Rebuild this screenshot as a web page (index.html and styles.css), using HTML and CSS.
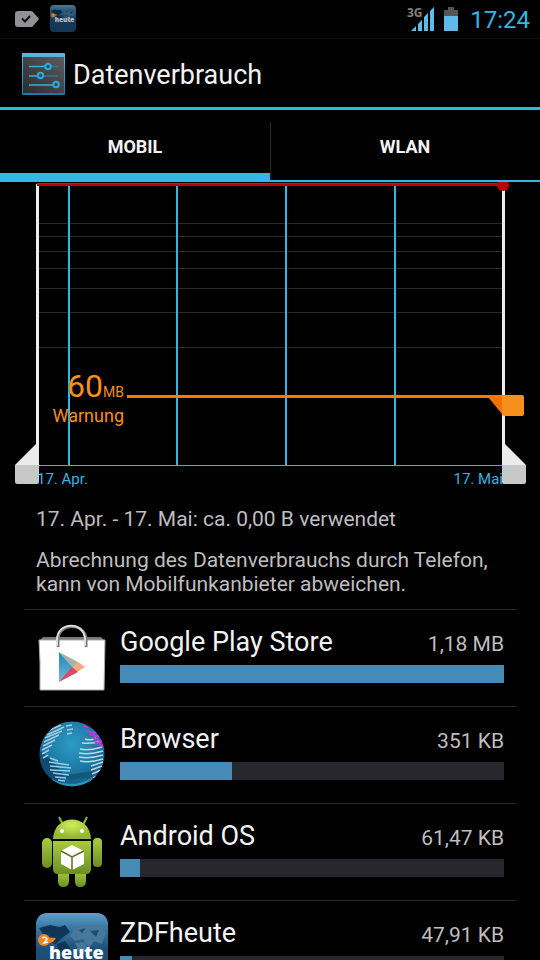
FILE: index.html
```html
<!DOCTYPE html>
<html lang="de">
<head>
    <meta charset="UTF-8">
    <meta name="viewport" content="width=device-width, initial-scale=1">
    <title>Datenverbrauch</title>
    <link rel="stylesheet" href="styles.css">
</head>
<body>
    <div class="status-bar">
        <svg class="status-tag" width="24" height="16" viewBox="0 0 24 16" aria-hidden="true">
            <path d="M3 0H16Q17.500 0 18.500 1.500L24 8L18.500 14.500Q17.500 16 16 16H3Q0 16 0 13V3Q0 0 3 0Z" fill="#929296"/>
            <path d="M7 7.500L10 10.500L15 5" fill="none" stroke="#111" stroke-width="2"/>
        </svg>
        <svg width="26" height="27" viewBox="0 0 72 72" preserveAspectRatio="none" aria-hidden="true">
            <use href="#heute" opacity="0.75"/>
        </svg>
        <span class="spacer"></span>
        <svg width="28" height="33" viewBox="0 -4 28 33" aria-hidden="true">
            <text class="network" x="0" y="11">3G</text>
            <path d="M4 25L9 20V25ZM11 18L15 14V25H11ZM17 11L21 7V25H17ZM23 5L27 1V25H23Z" fill="#5fb9e9"/>
        </svg>
        <svg class="battery" width="14" height="24" viewBox="0 0 14 24" aria-hidden="true">
            <path d="M4 0H10V3H14V9H0V3H4Z" fill="#555"/>
            <path d="M0 9H14V24H0Z" fill="#5fb9e9"/>
        </svg>
        <span class="clock">17:24</span>
    </div>

    <header class="title-bar">
        <svg width="44" height="42" viewBox="0 0 44 42" aria-hidden="true">
            <defs>
                <linearGradient id="panel" x1="0" y1="1" x2="1" y2="0">
                    <stop offset="0" stop-color="#292c2f"/>
                    <stop offset="1" stop-color="#5b5b5d"/>
                </linearGradient>
                <linearGradient id="frame" x1="0" y1="0" x2="0" y2="1">
                    <stop offset="0" stop-color="#58b9e8"/>
                    <stop offset="1" stop-color="#167ba8"/>
                </linearGradient>
            </defs>
            <rect width="43" height="42" rx="1" fill="url(#frame)"/>
            <rect x="1" y="4" width="41" height="36" fill="url(#panel)"/>
            <g fill="none" stroke="#267aa3" stroke-width="1.500">
                <path d="M29 13.500H36M22 23H36M37 32H38"/>
                <path d="M7 13.500H24M7 23H16M7 32H31" stroke="#38afe0"/>
            </g>
            <g fill="#354650" stroke="#2eaae0" stroke-width="2">
                <circle cx="26" cy="13.500" r="2.700"/>
                <circle cx="18.500" cy="22.500" r="2.700"/>
                <circle cx="34" cy="31.500" r="2.700"/>
            </g>
        </svg>
        <h1>Datenverbrauch</h1>
    </header>

    <div class="tabs" role="tablist">
        <button class="tab active" type="button" role="tab" aria-selected="true">MOBIL</button>
        <button class="tab" type="button" role="tab" aria-selected="false">WLAN</button>
    </div>

    <main>
        <svg class="chart" viewBox="0 0 540 312" role="img" aria-label="Datenverbrauch 17. Apr. - 17. Mai">
            <!-- Raster -->
            <path d="M38 41.500H502M38 54.500H502M38 69.500H502M38 86.500H502M38 106.500H502M38 130.500H502M38 165.500H502" stroke="#2b2b2b"/>
            <path d="M69 3V283M177 3V283M286 3V283M395 3V283" stroke="#33b5e5" stroke-width="2"/>
            <path d="M38 283.500H503" stroke="#33b5e5"/>
            <text class="axis" x="37" y="302">17. Apr.</text>
            <text class="axis" x="503" y="302" text-anchor="end">17. Mai</text>

            <!-- Zeitraum -->
            <path d="M36 2H39V283H36ZM502 2H505V283H502Z" fill="#ededed"/>
            <path d="M15 283L36 262H39V283ZM502 262H505L526 283H502Z" fill="#ebebeb"/>
            <path d="M15 283H39V300Q39 302 37 302H17Q15 302 15 300ZM502 283H526V300Q526 302 524 302H504Q502 302 502 300Z" fill="#c8c8c8"/>

            <!-- Limit -->
            <path d="M37 1.500H503" stroke="#5e4444"/>
            <path d="M37 3H503" stroke="#b90000" stroke-width="2"/>
            <circle cx="503" cy="3" r="6" fill="#b90000"/>

            <!-- Warnung -->
            <path d="M127 213H502V216H127Z" fill="#ff7800"/>
            <path d="M488 215H502V232Z" fill="#f57200"/>
            <path d="M502 213H522Q524 213 524 215V232Q524 234 522 234H504Q502 234 502 232Z" fill="#f68f1b"/>
            <text class="warning" x="124" y="215" text-anchor="end"><tspan class="amount">60</tspan><tspan class="unit">MB</tspan></text>
            <text class="warning" x="124" y="240" text-anchor="end">Warnung</text>
        </svg>

        <div class="summary">
            <p>17. Apr. - 17. Mai: ca. 0,00 B verwendet</p>
            <p>Abrechnung des Datenverbrauchs durch Telefon, kann von Mobilfunkanbieter abweichen.</p>
        </div>

        <ul class="apps">
            <li class="app">
                <svg class="app-icon" viewBox="0 0 72 72" aria-hidden="true">
                    <defs>
                        <linearGradient id="play" x1="0" y1="0" x2="0" y2="1">
                            <stop offset="0" stop-color="#178abb"/>
                            <stop offset="1" stop-color="#79b5d7"/>
                        </linearGradient>
                    </defs>
                    <path d="M7 15H65L69 19H3Z" fill="#777"/>
                    <path d="M3 18H69L68 68H4L4 40Z" fill="#fff" stroke="#aaa"/>
                    <path d="M22 25V18C22 0 50 0 50 18V25" fill="none" stroke="#777" stroke-width="3"/>
                    <path d="M21 24V18C21 -1 49 -1 49 18V24" fill="none" stroke="#ddd" stroke-width="2"/>
                    <path d="M23 30V60L38 46Z" fill="url(#play)"/>
                    <path d="M23 30L42 40L37 46Z" fill="#a8b4a6"/>
                    <path d="M42 40L49 45L41 50L36 46Z" fill="#f7aa7c"/>
                    <path d="M36 45L42 50L23 60Z" fill="#db4966"/>
                </svg>
                <div class="app-info">
                    <div class="app-line"><span class="app-name">Google Play Store</span><span class="app-size">1,18 MB</span></div>
                    <div class="bar"><div class="bar-fill" style="width: 100%"></div></div>
                </div>
            </li>
            <li class="app">
                <svg class="app-icon" viewBox="0 2 72 72" aria-hidden="true">
                    <defs>
                        <radialGradient id="sea" cx="0.5" cy="0.35" r="0.6">
                            <stop offset="0" stop-color="#2c9cc5"/>
                            <stop offset="0.65" stop-color="#1c7aa5"/>
                            <stop offset="1" stop-color="#10618c"/>
                        </radialGradient>
                        <clipPath id="globe"><circle cx="36" cy="37" r="32.500"/></clipPath>
                    </defs>
                    <circle cx="36" cy="37" r="32.500" fill="url(#sea)"/>
                    <g clip-path="url(#globe)" fill="none">
                        <path d="M4 34L13 41L28 57L26 67L14 61L4 48Z" fill="#104c70"/>
                        <path d="M28 58L61 54L56 60L33 63Z" fill="#145878"/>
                        <path d="M14 13L25 8M11 18L28 10M9 21L26 14M8 25L23 18M7 29L19 23M6 33L16 28M6 37L13 33M7 41L12 38M30 9L36 8M31 13L37 12M31 17L36 16" stroke="#a9cde0" stroke-width="1.500"/>
                        <path d="M14 41L22 44M13 45L33 48M14 49L35 51M14 53L34 54M17 56L33 58M19 60L30 61M22 63L29 64" stroke="#97cce7" stroke-width="1.500"/>
                        <path d="M49 22Q55 24 60 21M46 26Q56 27 66 24M44 32Q54 34 66 30M43 36Q54 38 67 34M43 40Q54 42 67 38M44 44Q54 46 67 42M55 49L67 45M55 53L66 49M56 57L65 53M57 61L63 58" stroke="#c5d4d8" stroke-width="1.500"/>
                        <path d="M47 9L52 10M51 14L60 16M53 17L63 20M57 21L66 25M59 25L68 29" stroke="#b43bdc" stroke-width="2"/>
                        <path d="M15 63Q36 74 57 62" stroke="#33b5e5" stroke-width="3" opacity="0.6"/>
                    </g>
                </svg>
                <div class="app-info">
                    <div class="app-line"><span class="app-name">Browser</span><span class="app-size">351 KB</span></div>
                    <div class="bar"><div class="bar-fill" style="width: 29.2%"></div></div>
                </div>
            </li>
            <li class="app">
                <svg class="app-icon" viewBox="0 0 72 72" aria-hidden="true">
                    <defs>
                        <linearGradient id="robot" x1="0" y1="0" x2="0" y2="1">
                            <stop offset="0" stop-color="#a9cb3c"/>
                            <stop offset="1" stop-color="#6c8e24"/>
                        </linearGradient>
                        <radialGradient id="head" cx="0.5" cy="0.3" r="0.6">
                            <stop offset="0" stop-color="#d0ee58"/>
                            <stop offset="1" stop-color="#94b733"/>
                        </radialGradient>
                    </defs>
                    <path d="M27 9L23 1M47 9L51 1" stroke="#92b335" stroke-width="2"/>
                    <path d="M17 23C18 -3 54 -3 55 23Z" fill="url(#head)"/>
                    <g fill="url(#robot)">
                        <path d="M22 55H33V65Q33 71 27 71Q22 71 22 65ZM39 55H50V65Q50 71 44 71Q39 71 39 65Z"/>
                        <path d="M17 25H55V53Q55 58 50 58H22Q17 58 17 53Z"/>
                        <rect x="6" y="22" width="10" height="30" rx="5"/>
                        <rect x="57" y="22" width="9" height="29" rx="4"/>
                    </g>
                    <circle cx="26" cy="15" r="2" fill="#fff"/>
                    <circle cx="46" cy="15" r="2" fill="#fff"/>
                    <path d="M36 29L48 35V48L36 54L25 48V35Z" fill="#fff"/>
                    <path d="M25 35L36 41L48 35M36 41V54" fill="none" stroke="#5e6d2a" stroke-width="1.500"/>
                </svg>
                <div class="app-info">
                    <div class="app-line"><span class="app-name">Android OS</span><span class="app-size">61,47 KB</span></div>
                    <div class="bar"><div class="bar-fill" style="width: 5.2%"></div></div>
                </div>
            </li>
            <li class="app">
                <svg class="app-icon" viewBox="0 0 72 72" aria-hidden="true">
                    <defs>
                        <linearGradient id="sky" x1="0" y1="0" x2="0" y2="1">
                            <stop offset="0" stop-color="#63a0c8"/>
                            <stop offset="0.18" stop-color="#3c7ca8"/>
                            <stop offset="0.5" stop-color="#1d5077"/>
                            <stop offset="1" stop-color="#17496f"/>
                        </linearGradient>
                        <g id="heute">
                            <rect width="72" height="72" rx="11" fill="url(#sky)"/>
                            <path d="M3 15L14 12L24 14L29 12L34 19L26 25L20 31L13 29L8 23ZM21 31L29 28L34 35L28 46L22 43Z" fill="#0f3558"/>
                            <path d="M38 16L48 12L65 13L70 20L66 31L58 28L53 35L47 26L39 28L34 23ZM39 30L49 29L52 37L44 42Z" fill="#47779a"/>
                            <path d="M43 17L50 15L46 20ZM54 18L63 17L60 24Z" fill="#1a4e75"/>
                            <circle cx="8" cy="27" r="6" fill="#ee8521"/>
                            <path d="M8 24L20 25L17 29L11 31Z" fill="#ee8521"/>
                            <path d="M6 25Q9 23 11 26L8 30L12 29" fill="none" stroke="#fff" stroke-width="1.500"/>
                            <text class="heute-text" x="13" y="46">heute</text>
                        </g>
                    </defs>
                    <use href="#heute"/>
                </svg>
                <div class="app-info">
                    <div class="app-line"><span class="app-name">ZDFheute</span><span class="app-size">47,91 KB</span></div>
                    <div class="bar"><div class="bar-fill" style="width: 3.1%"></div></div>
                </div>
            </li>
        </ul>
    </main>
</body>
</html>
```

FILE: styles.css
```css
* {
    box-sizing: border-box;
}

body {
    margin: 0;
    height: 100vh;
    display: flex;
    flex-direction: column;
    overflow: hidden;
    background: #000;
    color: #f3f3f3;
    font-family: Roboto, sans-serif;
}

svg {
    display: block;
    flex-shrink: 0;
}

h1,
p,
ul {
    margin: 0;
    padding: 0;
}

.status-bar {
    display: flex;
    align-items: center;
    flex-shrink: 0;
    height: 39px;
    padding: 0 10px 1px 15px;
    border-bottom: 1px solid #111;
}

.status-tag {
    margin-right: 11px;
}

.spacer {
    flex: 1;
}

.network {
    font-family: "Noto Sans", sans-serif;
    font-size: 12px;
    font-weight: bold;
    fill: #808080;
}

.battery {
    margin: 0 12px 0 9px;
}

.clock {
    padding-top: 2px;
    color: #33b5e5;
    font-size: 24px;
}

.title-bar {
    display: flex;
    align-items: center;
    flex-shrink: 0;
    gap: 7px;
    height: 71px;
    padding: 2px 22px 0;
    border-bottom: 3px solid #33b5e5;
}

h1 {
    padding-top: 2px;
    font-size: 27px;
    font-weight: normal;
}

.tabs {
    display: flex;
    flex-shrink: 0;
    height: 72px;
}

.tab {
    flex: 1;
    padding: 3px 0 0;
    border: none;
    border-bottom: 2px solid #33b5e5;
    background: linear-gradient(#2b2b2b, #2b2b2b) 0 12px / 1px 48px no-repeat;
    color: #f3f3f3;
    font-family: inherit;
    font-size: 18px;
    font-weight: bold;
    cursor: pointer;
}

.tab.active {
    padding-top: 10px;
    border-bottom-width: 9px;
    background: none;
}

main {
    flex: 1;
    min-height: 0;
    overflow-y: auto;
    scrollbar-width: none;
}

.chart {
    width: 100%;
}

.axis {
    font-size: 15px;
    fill: #33b5e5;
}

.warning {
    font-size: 18px;
    fill: #f68f1b;
}

.amount {
    font-size: 32px;
}

.unit {
    font-size: 14px;
}

.summary {
    display: grid;
    gap: 17px;
    padding: 13px 36px;
    color: #bebebe;
    font-size: 21px;
    line-height: 24px;
}

.apps {
    margin: 0 24px;
    list-style: none;
}

.app {
    display: flex;
    align-items: center;
    gap: 12px;
    height: 97px;
    padding: 0 12px;
    border-top: 1px solid #2b2b2b;
}

.app-icon {
    width: 72px;
    height: 72px;
}

.app-info {
    flex: 1;
    align-self: flex-start;
    padding-top: 16px;
}

.app-line {
    display: flex;
    align-items: baseline;
    justify-content: space-between;
    margin-bottom: 5px;
    line-height: 32px;
}

.app-name {
    font-size: 27px;
}

.app-size {
    color: #bebebe;
    font-size: 21px;
}

.bar {
    height: 18px;
    background: #29272e;
}

.bar-fill {
    height: 100%;
    background: #468ab8;
}

.heute-text {
    font-family: "Open Sans", sans-serif;
    font-size: 18px;
    font-weight: 800;
    fill: #fff;
}
```
